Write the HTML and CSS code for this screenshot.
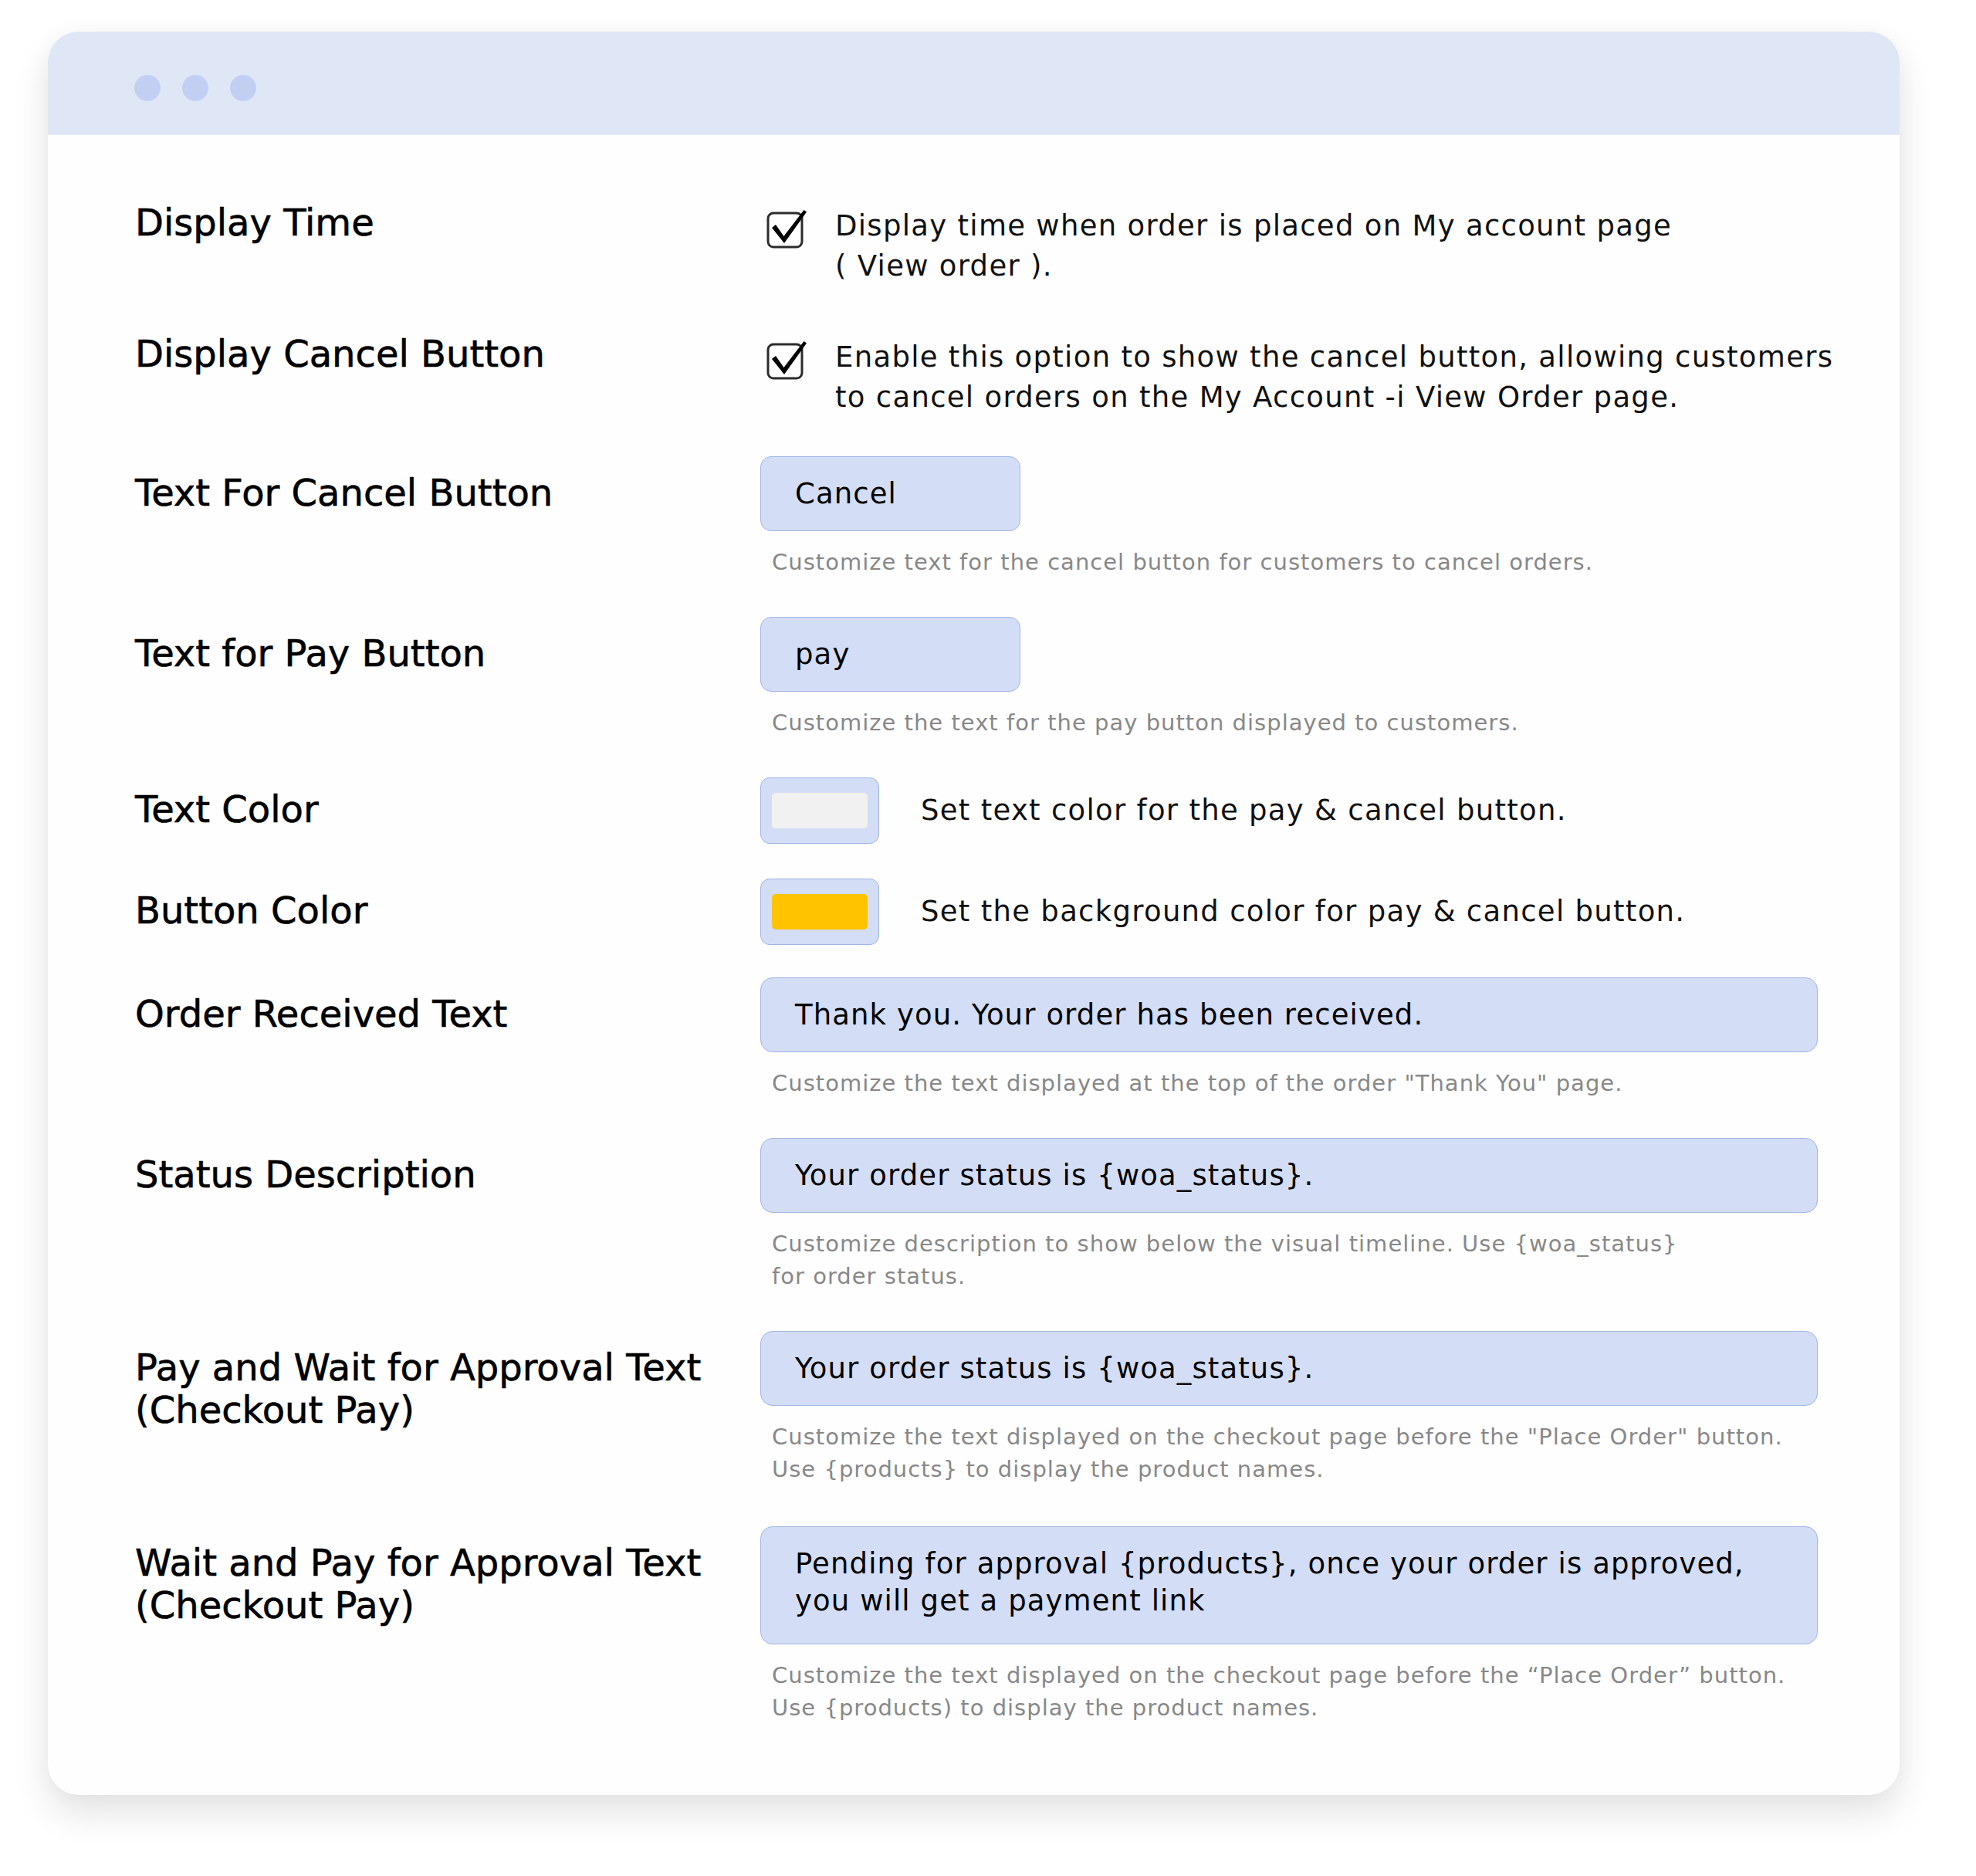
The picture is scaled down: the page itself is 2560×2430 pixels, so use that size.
FILE: index.html
```html
<!DOCTYPE html>
<html lang="en">
<head>
<meta charset="utf-8">
<title>Order settings</title>
<link rel="stylesheet" href="styles.css">
</head>
<body>
<div class="card">
  <div class="titlebar">
    <span class="dot"></span><span class="dot"></span><span class="dot"></span>
  </div>
  <div class="form">
    <div class="row row-check">
      <div class="label">Display Time</div>
      <div class="control check-line">
        <svg class="checkbox" viewBox="0 0 54 52" width="54" height="52" aria-hidden="true">
          <rect x="2" y="5" width="44" height="44" rx="7" fill="#fff" stroke="#2b2b2b" stroke-width="3"/>
          <path d="M7 24 L12 20 L22.5 35 L48.5 1 L52 3.5 L23 44 Z" fill="#000"/>
        </svg>
        <div class="desc">Display time when order is placed on My account page<br>( View order ).</div>
      </div>
    </div>

    <div class="row row-check row-second">
      <div class="label">Display Cancel Button</div>
      <div class="control check-line">
        <svg class="checkbox" viewBox="0 0 54 52" width="54" height="52" aria-hidden="true">
          <rect x="2" y="5" width="44" height="44" rx="7" fill="#fff" stroke="#2b2b2b" stroke-width="3"/>
          <path d="M7 24 L12 20 L22.5 35 L48.5 1 L52 3.5 L23 44 Z" fill="#000"/>
        </svg>
        <div class="desc">Enable this option to show the cancel button, allowing customers<br>to cancel orders on the My Account -i View Order page.</div>
      </div>
    </div>

    <div class="row row-input">
      <div class="label">Text For Cancel Button</div>
      <div class="control">
        <div class="field field-small">Cancel</div>
        <div class="help">Customize text for the cancel button for customers to cancel orders.</div>
      </div>
    </div>

    <div class="row row-input">
      <div class="label">Text for Pay Button</div>
      <div class="control">
        <div class="field field-small">pay</div>
        <div class="help">Customize the text for the pay button displayed to customers.</div>
      </div>
    </div>

    <div class="row row-color">
      <div class="label">Text Color</div>
      <div class="control color-line">
        <div class="swatch-box"><span class="swatch swatch-light"></span></div>
        <div class="desc">Set text color for the pay &amp; cancel button.</div>
      </div>
    </div>

    <div class="row row-color row-tight">
      <div class="label">Button Color</div>
      <div class="control color-line">
        <div class="swatch-box"><span class="swatch swatch-yellow"></span></div>
        <div class="desc">Set the background color for pay &amp; cancel button.</div>
      </div>
    </div>

    <div class="row row-input row-tighter">
      <div class="label">Order Received Text</div>
      <div class="control">
        <div class="field">Thank you. Your order has been received.</div>
        <div class="help">Customize the text displayed at the top of the order "Thank You" page.</div>
      </div>
    </div>

    <div class="row row-input">
      <div class="label">Status Description</div>
      <div class="control">
        <div class="field">Your order status is {woa_status}.</div>
        <div class="help">Customize description to show below the visual timeline. Use {woa_status}<br>for order status.</div>
      </div>
    </div>

    <div class="row row-input">
      <div class="label">Pay and Wait for Approval Text<br>(Checkout Pay)</div>
      <div class="control">
        <div class="field">Your order status is {woa_status}.</div>
        <div class="help">Customize the text displayed on the checkout page before the "Place Order" button.<br>Use {products} to display the product names.</div>
      </div>
    </div>

    <div class="row row-input row-last">
      <div class="label">Wait and Pay for Approval Text<br>(Checkout Pay)</div>
      <div class="control">
        <div class="field field-multi">Pending for approval {products}, once your order is approved,<br>you will get a payment link</div>
        <div class="help">Customize the text displayed on the checkout page before the “Place Order” button.<br>Use {products) to display the product names.</div>
      </div>
    </div>
  </div>
</div>
</body>
</html>
```

FILE: styles.css
```css
html, body {
  margin: 0;
  padding: 0;
  background: #ffffff;
}

body {
  font-family: "DejaVu Sans", "Noto Sans", sans-serif;
  color: #000;
  padding: 41px 0 0 62px;
  min-height: 2430px;
  box-sizing: border-box;
}

.card {
  width: 2399px;
  height: 2284px;
  background: #fefefe;
  border-radius: 40px;
  overflow: hidden;
  box-shadow: 0 24px 48px rgba(0, 0, 0, 0.11), 0 0 30px rgba(0, 0, 0, 0.03);
}

.titlebar {
  height: 134px;
  background: #dfe7f6;
  border-bottom: 1px solid #e7edf8;
  display: flex;
  gap: 28px;
  padding: 56px 0 0 112px;
  box-sizing: border-box;
}

.dot {
  width: 34px;
  height: 34px;
  border-radius: 50%;
  background: #c3cff2;
}

.form {
  display: flex;
  flex-direction: column;
  padding: 85px 0 0 113px;
}

.row {
  display: grid;
  grid-template-columns: 810px 1370px;
  align-items: start;
  margin-top: 50px;
}

.row:first-child {
  margin-top: 0;
}

.row-second {
  margin-top: 59px;
}

.row-tight {
  margin-top: 45px;
}

.row-tighter {
  margin-top: 42px;
}

.row-last {
  margin-top: 53px;
}

.label {
  font-size: 48px;
  line-height: 55px;
  font-weight: 500;
  -webkit-text-stroke: 0.6px #000;
  white-space: nowrap;
}

.row-check .label {
  margin-top: 1px;
}

.row-input .label {
  margin-top: 20px;
}

.row-color .label {
  margin-top: 14px;
}

.desc {
  font-size: 37px;
  line-height: 52px;
  letter-spacing: 0.035em;
  color: #111;
  white-space: nowrap;
}

.check-line {
  display: flex;
  align-items: flex-start;
  padding-top: 7px;
}

.checkbox {
  flex: none;
  margin: 4px 35px 0 8px;
}

.field {
  box-sizing: border-box;
  width: 1370px;
  background: #d3ddf5;
  border: 1px solid #a2b5ea;
  border-radius: 16px;
  padding: 24px 44px 23px;
  font-size: 37px;
  line-height: 48px;
  letter-spacing: 0.03em;
  color: #000;
  white-space: nowrap;
}

.field-multi {
  padding-bottom: 31px;
}

.field-small {
  width: 337px;
  border-radius: 14px;
}

.help {
  margin: 19px 0 0 15px;
  font-size: 29px;
  line-height: 42px;
  letter-spacing: 0.035em;
  color: #888888;
  white-space: nowrap;
}

.color-line {
  display: flex;
  align-items: center;
  gap: 54px;
}

.swatch-box {
  box-sizing: border-box;
  width: 154px;
  height: 86px;
  background: #d3ddf5;
  border: 1px solid #a2b5ea;
  border-radius: 12px;
  padding: 19px 14px;
  display: flex;
}

.swatch {
  flex: 1;
  border-radius: 5px;
}

.swatch-light {
  background: #f1f1f1;
}

.swatch-yellow {
  background: #ffc300;
}
```
